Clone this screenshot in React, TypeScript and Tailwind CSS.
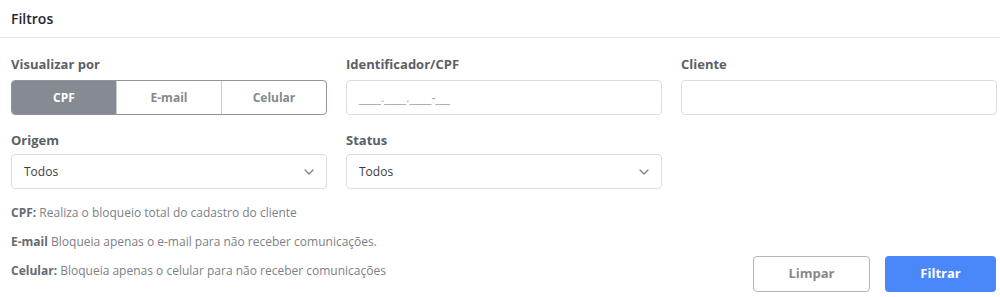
import { ChevronDown } from "lucide-react";

const font = { fontFamily: "'Open Sans', Lato, sans-serif" };

function Label({ children }: { children: React.ReactNode }) {
  return <div className="h-4 text-[13px] font-bold leading-4 text-[#5b5f68]">{children}</div>;
}

function Select({ value }: { value: string }) {
  return (
    <div className="flex h-[35px] items-center justify-between rounded border border-[#dcdde0] pl-3 pr-[9px]">
      <span className="text-[12px] text-[#3a3d42]">{value}</span>
      <ChevronDown size={16} strokeWidth={2} className="text-[#80848c]" />
    </div>
  );
}

export default function App() {
  const modes = ["CPF", "E-mail", "Celular"];

  return (
    <div className="h-[297px] w-[1000px] overflow-hidden bg-white" style={font}>
      <div className="h-[38px] border-b border-[#e3e4e6] px-[11px] pt-[6px]">
        <span className="text-[14px] font-semibold leading-[18px] text-[#26282c]">Filtros</span>
      </div>

      <div className="pl-[11px] pr-[4px] pt-[18px]">
        <div className="grid grid-cols-[316px_316px_316px] gap-x-[19px]">
          <div>
            <Label>Visualizar por</Label>
            <div className="mt-2 flex h-[35px] overflow-hidden rounded border border-[#8f939b]">
              {modes.map((m, i) => (
                <div
                  key={m}
                  className={
                    i === 0
                      ? "flex flex-1 items-center justify-center bg-[#868a93] text-[12px] font-bold text-white"
                      : "flex flex-1 items-center justify-center border-l border-[#c9cbcf] text-[12px] font-bold text-[#85898f]"
                  }
                >
                  {m}
                </div>
              ))}
            </div>
          </div>
          <div>
            <Label>Identificador/CPF</Label>
            <div className="mt-2 flex h-[35px] items-center rounded border border-[#dcdde0] pl-3">
              <span className="font-['Liberation_Sans',sans-serif] text-[13px] text-[#a3a6ab]">___.___.___-__</span>
            </div>
          </div>
          <div>
            <Label>Cliente</Label>
            <div className="mt-2 h-[35px] rounded border border-[#dcdde0]" />
          </div>

          <div className="mt-[17px]">
            <Label>Origem</Label>
            <div className="mt-[6px]">
              <Select value="Todos" />
            </div>
          </div>
          <div className="mt-[17px]">
            <Label>Status</Label>
            <div className="mt-[6px]">
              <Select value="Todos" />
            </div>
          </div>
          <div />
        </div>

        <div className="flex justify-between">
          <div className="mt-4 space-y-[13px] text-[12px] leading-4 text-[#7c8088]">
            <p>
              <b className="text-[#666a72]">CPF:</b> Realiza o bloqueio total do cadastro do cliente
            </p>
            <p>
              <b className="text-[#666a72]">E-mail</b> Bloqueia apenas o e-mail para não receber comunicações.
            </p>
            <p>
              <b className="text-[#666a72]">Celular:</b> Bloqueia apenas o celular para não receber comunicações
            </p>
          </div>
          <div className="mt-[67px] flex gap-[15px]">
            <button className="h-9 w-[117px] rounded border border-[#b3b6bb] text-[13px] font-bold text-[#85898f]">
              Limpar
            </button>
            <button className="h-9 w-[111px] rounded bg-[#4a87f8] text-[13px] font-bold text-white">
              Filtrar
            </button>
          </div>
        </div>
      </div>
    </div>
  );
}
